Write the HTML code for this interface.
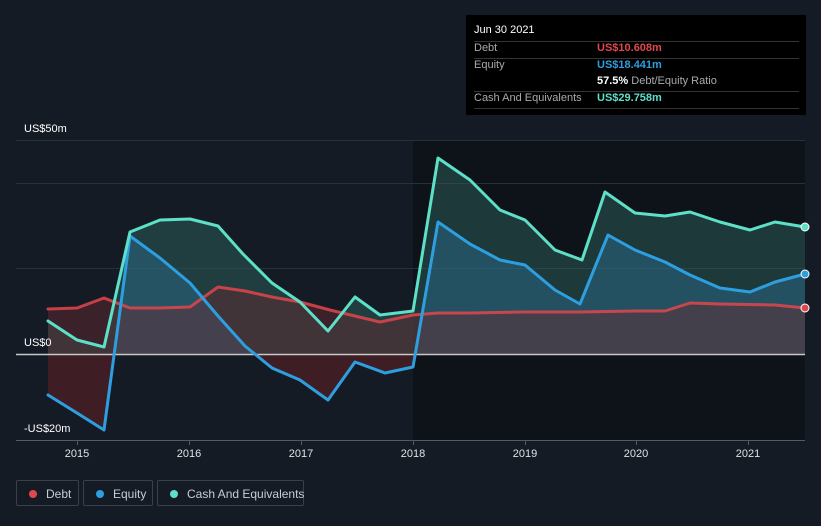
<!DOCTYPE html>
<html><head><meta charset="utf-8"><style>
body{margin:0;width:821px;height:526px;background:#151b25;font-family:"Liberation Sans",sans-serif;overflow:hidden;position:relative}
.tt{position:absolute;left:466px;top:15px;width:340px;height:100px;background:#000;color:#fff;font-size:11px}
.tt .r{position:absolute;left:8px;width:325px;border-top:1px solid #333}
.tt span{position:absolute;white-space:nowrap}
.lg{position:absolute;top:480px;height:26px;border:1px solid #3a404a;border-radius:2px;color:#c9ccd1;font-size:12px;line-height:26px;box-sizing:border-box;white-space:nowrap}
.lg i{position:absolute;left:12px;top:9px;width:8px;height:8px;border-radius:50%}
.lg b{font-weight:normal;position:absolute;left:29px}
</style></head><body>
<svg width="821" height="526" style="position:absolute;left:0;top:0">
<defs>
<clipPath id="above"><rect x="0" y="0" width="821" height="354"/></clipPath>
<clipPath id="below"><rect x="0" y="354" width="821" height="200"/></clipPath>
</defs>
<rect x="413" y="140" width="392" height="300" fill="#0e1219"/>
<g stroke="#2a303a" stroke-width="1"><line x1="16" x2="805" y1="140.5" y2="140.5"/><line x1="16" x2="805" y1="183.5" y2="183.5"/><line x1="16" x2="805" y1="268.5" y2="268.5"/></g>
<line x1="16" x2="805" y1="440.5" y2="440.5" stroke="#555b64"/>
<g stroke="#555b64"><line x1="77.5" x2="77.5" y1="440" y2="445"/><line x1="189.5" x2="189.5" y1="440" y2="445"/><line x1="301.5" x2="301.5" y1="440" y2="445"/><line x1="413.5" x2="413.5" y1="440" y2="445"/><line x1="525.5" x2="525.5" y1="440" y2="445"/><line x1="636.5" x2="636.5" y1="440" y2="445"/><line x1="748.5" x2="748.5" y1="440" y2="445"/></g>
<polygon fill="#2a5a55" fill-opacity="0.55" points="48,354 48,321 77,340 104,347 130,232 160,220 190,219 218,226 243,254 272,283 300,302 328,331 355,297 380,315 413,311 438,158 470,180 500,210 525,220 555,250 582,260 605,192 635,213 665,216 690,212 720,222 750,230 775,222 805,227 805,354"/>
<polygon clip-path="url(#above)" fill="#2a6a8a" fill-opacity="0.5" points="48,354 48,395 77,413 104,430 130,236 160,258 190,283 218,316 245,346 272,368 300,380 328,400 355,362 385,373 413,367 438,222 470,244 500,260 525,265 555,290 580,304 608,235 635,250 665,262 690,275 720,288 750,292 775,282 805,274 805,354"/>
<polygon fill="#6a2a30" fill-opacity="0.45" clip-path="url(#above)" points="48,354 48,309 77,308 104,298 130,308 160,308 190,307 218,287 245,291 272,297 300,302 330,310 355,316 380,322 413,315 438,313 470,313 525,312 580,312 636,311 665,311 690,303 720,304 775,305 805,308 805,354"/>
<polygon fill="#4a1e24" fill-opacity="0.8" clip-path="url(#below)" points="48,309 77,308 104,298 130,308 160,308 190,307 218,287 245,291 272,297 300,302 330,310 355,316 380,322 413,315 438,313 805,308 805,274 438,222 413,367 385,373 355,362 328,400 300,380 272,368 245,346 218,316 190,283 160,258 130,236 104,430 77,413 48,395"/>
<line x1="16" x2="805" y1="354.5" y2="354.5" stroke="#c8c8c8" stroke-width="1.5"/>
<g fill="none" stroke-width="3" stroke-linejoin="round" stroke-linecap="round">
<polyline stroke="#e0474c" stroke-opacity="0.85" points="48,309 77,308 104,298 130,308 160,308 190,307 218,287 245,291 272,297 300,302 330,310 355,316 380,322 413,315 438,313 470,313 525,312 580,312 636,311 665,311 690,303 720,304 775,305 805,308"/>
<polyline stroke="#2d9fe0" points="48,395 77,413 104,430 130,236 160,258 190,283 218,316 245,346 272,368 300,380 328,400 355,362 385,373 413,367 438,222 470,244 500,260 525,265 555,290 580,304 608,235 635,250 665,262 690,275 720,288 750,292 775,282 805,274"/>
<polyline stroke="#5ee0c8" points="48,321 77,340 104,347 130,232 160,220 190,219 218,226 243,254 272,283 300,302 328,331 355,297 380,315 413,311 438,158 470,180 500,210 525,220 555,250 582,260 605,192 635,213 665,216 690,212 720,222 750,230 775,222 805,227"/>
</g>
<g stroke="#fff" stroke-width="1"><circle cx="805" cy="308" r="4" fill="#e0474c"/><circle cx="805" cy="274" r="4" fill="#2d9fe0"/><circle cx="805" cy="227" r="4" fill="#5ee0c8"/></g>
<g fill="#fff" font-size="11" font-family="Liberation Sans, sans-serif">
<text x="24" y="132">US$50m</text><text x="24" y="346">US$0</text><text x="24" y="432">-US$20m</text>
</g>
<g fill="#dfe1e4" font-size="11" font-family="Liberation Sans, sans-serif" text-anchor="middle">
<text x="77" y="457">2015</text><text x="189" y="457">2016</text><text x="301" y="457">2017</text><text x="413" y="457">2018</text><text x="525" y="457">2019</text><text x="636" y="457">2020</text><text x="748" y="457">2021</text>
</g>
</svg>
<div class="tt">
<span style="left:8px;top:9px">Jun 30 2021</span>
<div class="r" style="top:26px"></div>
<span style="left:8px;top:27px;color:#aaa">Debt</span><span style="left:131px;top:27px;color:#e0474c;font-weight:bold">US$10.608m</span>
<div class="r" style="top:43px"></div>
<span style="left:8px;top:44px;color:#aaa">Equity</span><span style="left:131px;top:44px;color:#2d9fe0;font-weight:bold">US$18.441m</span>
<span style="left:131px;top:60px"><b>57.5%</b> <span style="position:static;color:#aaa">Debt/Equity Ratio</span></span>
<div class="r" style="top:76px"></div>
<span style="left:8px;top:77px;color:#aaa">Cash And Equivalents</span><span style="left:131px;top:77px;color:#5ee0c8;font-weight:bold">US$29.758m</span>
<div class="r" style="top:93px"></div>
</div>
<div class="lg" style="left:16px;width:63px"><i style="background:#e0474c"></i><b>Debt</b></div>
<div class="lg" style="left:83px;width:70px"><i style="background:#2d9fe0"></i><b>Equity</b></div>
<div class="lg" style="left:157px;width:147px"><i style="background:#5ee0c8"></i><b>Cash And Equivalents</b></div>
</body></html>
